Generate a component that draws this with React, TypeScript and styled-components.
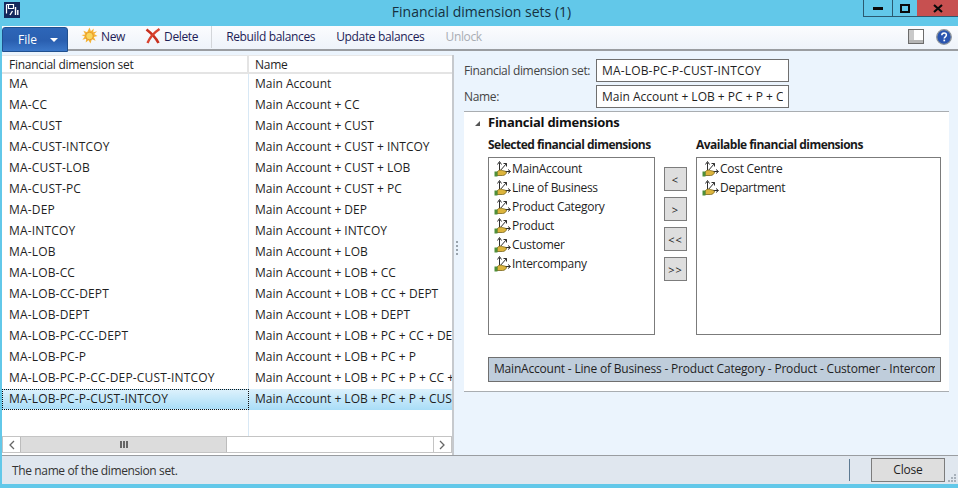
import { createGlobalStyle, styled } from "styled-components";

const GlobalStyle = createGlobalStyle`
  html, body {
    margin: 0;
    padding: 0;
    width: 958px;
    height: 488px;
    overflow: hidden;
    font-family: "Open Sans", "Liberation Sans", sans-serif;
    font-size: 12px;
    color: #1f1f1f;
  }
  * { box-sizing: border-box; }
`;

const Win = styled.div`
  width: 958px;
  height: 488px;
  background: #62c8e9;
  display: flex;
  flex-direction: column;
  padding: 0 0 4px 2px;
`;

const TitleBar = styled.div`
  height: 26px;
  margin-left: -2px;
  display: flex;
  align-items: flex-start;
  flex: none;
`;

const AppIcon = styled.svg`
  margin: 2px 0 0 4px;
`;

const Title = styled.div`
  flex: 1;
  text-align: center;
  font-size: 14px;
  line-height: 23px;
  color: #16303f;
  padding-left: 80px;
`;

const Controls = styled.div`
  display: flex;
  height: 17px;
`;

const Ctl = styled.div<{ $w: number; $close?: boolean }>`
  width: ${(p) => p.$w}px;
  height: 17px;
  display: flex;
  align-items: center;
  justify-content: center;
  background: ${(p) => (p.$close ? "#c75050" : "transparent")};
  border-bottom: 1px solid #2b5a70;
  border-left: ${(p) => (p.$close ? "none" : "1px solid #2b5a70")};
`;

const Toolbar = styled.div`
  height: 25px;
  flex: none;
  background: linear-gradient(#fbfcfe, #eef3fa);
  border-bottom: 2px solid #9a9da1;
  display: flex;
  align-items: stretch;
`;

const FileBtn = styled.div`
  width: 66px;
  height: 25px;
  margin-top: 1px;
  border-radius: 3px 3px 0 0;
  background: linear-gradient(#2d66b8, #2a5fb0 55%, #3c78c9);
  border: 1px solid #20508f;
  color: #fff;
  display: flex;
  align-items: center;
  padding-left: 15px;
  gap: 13px;
  position: relative;
  z-index: 1;
`;

const Caret = styled.span`
  width: 0;
  height: 0;
  border-left: 4px solid transparent;
  border-right: 4px solid transparent;
  border-top: 4px solid #fff;
`;

const ToolGroup = styled.div`
  display: flex;
  align-items: center;
  gap: 20px;
  padding: 0 13px 2px 13px;
  border-right: 1px solid #d3d6da;
  margin-bottom: 1px;
`;

const ToolText = styled.div`
  display: flex;
  align-items: center;
  gap: 21px;
  padding: 0 0 2px 14px;
`;

const ToolBtn = styled.span<{ $off?: boolean }>`
  display: flex;
  align-items: center;
  gap: 3px;
  white-space: nowrap;
  letter-spacing: -0.35px;
  color: ${(p) => (p.$off ? "#a9adb3" : "#1d1d57")};
`;

const ToolEnd = styled.div`
  margin-left: auto;
  display: flex;
  align-items: center;
  gap: 12px;
  padding: 0 6px 2px 0;
`;

const Body = styled.div`
  flex: 1;
  display: flex;
  min-height: 0;
  background: #ebf4fd;
`;

const GridPane = styled.div`
  width: 452px;
  flex: none;
  margin-top: 4px;
  background: #fff;
  border-right: 2px solid #c6c9cd;
  display: flex;
  flex-direction: column;
`;

const Head = styled.div`
  display: grid;
  grid-template-columns: 247px 1fr;
  height: 19px;
  flex: none;
  border-top: 1px solid #e7e7e7;
  border-bottom: 2px solid #e4e4e4;
  line-height: 17px;
`;

const HeadCell = styled.div`
  padding-left: 7px;
  letter-spacing: -0.28px;
  border-right: 2px solid #e4e4e4;
  &:last-child { border-right: none; padding-left: 6px; }
`;

const Rows = styled.div`
  flex: 1;
  overflow: hidden;
  background: linear-gradient(#d8e8f5, #d8e8f5) 246px 0 / 1px 100% no-repeat;
`;

const Row = styled.div`
  display: grid;
  grid-template-columns: 247px 1fr;
  height: 21px;
  line-height: 20px;
`;

const CodeCell = styled.div<{ $focus?: boolean }>`
  padding-left: ${(p) => (p.$focus ? "6px" : "7px")};
  white-space: nowrap;
  overflow: hidden;
  letter-spacing: 0.17px;
  background: ${(p) => (p.$focus ? "linear-gradient(#dcf1fc, #a9ddf7)" : "transparent")};
  border: ${(p) => (p.$focus ? "1px dotted #111" : "none")};
  line-height: ${(p) => (p.$focus ? "18px" : "20px")};
`;

const NameCell = styled.div<{ $sel?: boolean }>`
  padding-left: 6px;
  white-space: nowrap;
  overflow: hidden;
  background: ${(p) => (p.$sel ? "linear-gradient(#dcf1fc, #a9ddf7)" : "transparent")};
`;

const HScroll = styled.div`
  height: 17px;
  flex: none;
  margin-bottom: 2px;
  border: 1px solid #c4c4c4;
  display: flex;
  background: #fff;
`;

const ScrollArrow = styled.div`
  width: 17px;
  display: flex;
  align-items: center;
  justify-content: center;
`;

const Thumb = styled.div`
  width: 207px;
  background: #dcdcdc;
  border: 1px solid #bcbcbc;
  border-width: 0 1px;
  display: flex;
  align-items: center;
  justify-content: center;
  gap: 1px;
`;

const Grip = styled.i`
  width: 2px;
  height: 7px;
  background: #666;
`;

const Track = styled.div`
  flex: 1;
  border-right: 1px solid #c4c4c4;
`;

const Splitter = styled.div`
  width: 10px;
  flex: none;
  display: flex;
  flex-direction: column;
  align-items: center;
  justify-content: center;
  gap: 2px;
  padding: 0 4px 10px 0;
`;

const Dot = styled.i`
  width: 2px;
  height: 2px;
  background: #9aa4ad;
`;

const Form = styled.div`
  flex: 1;
  min-width: 0;
  padding: 8px 9px 0 0;
  display: flex;
  flex-direction: column;
`;

const FieldRow = styled.div`
  display: flex;
  align-items: center;
  height: 23px;
  margin-bottom: 3px;
`;

const FieldLabel = styled.div`
  width: 132px;
  letter-spacing: -0.33px;
  color: #444;
`;

const Input = styled.div<{ $caps?: boolean }>`
  width: 193px;
  height: 23px;
  background: #fff;
  border: 1px solid #6f6f6f;
  padding: 0 5px 0 5px;
  line-height: 21px;
  letter-spacing: ${(p) => (p.$caps ? "0.17px" : "0")};
`;

const Clip = styled.span`
  display: block;
  overflow: hidden;
  white-space: nowrap;
`;

const Group = styled.div`
  height: 281px;
  background: #fff;
  border-top: 1px solid #a9adb1;
  border-bottom: 1px solid #a9adb1;
  padding: 0 8px 0 24px;
`;

const GroupTitle = styled.div`
  height: 22px;
  font-size: 13px;
  font-weight: 700;
  line-height: 21px;
  letter-spacing: -0.25px;
  color: #111;
  position: relative;
`;

const Tri = styled.span`
  position: absolute;
  left: -13px;
  top: 9px;
  width: 0;
  height: 0;
  border-left: 5px solid transparent;
  border-bottom: 5px solid #555;
`;

const Columns = styled.div`
  display: grid;
  grid-template-columns: 167px 41px 245px;
`;

const SubTitle = styled.div`
  height: 23px;
  line-height: 21px;
  font-weight: 700;
  letter-spacing: -0.52px;
  color: #1a1a1a;
  white-space: nowrap;
`;

const ListBox = styled.div`
  height: 178px;
  border: 1px solid #7b7b7b;
  padding: 1px 0 0 5px;
  background: #fff;
`;

const ListItem = styled.div`
  display: flex;
  align-items: center;
  gap: 1px;
  height: 19px;
  letter-spacing: -0.28px;
  white-space: nowrap;
`;

const Moves = styled.div`
  padding: 33px 0 0 9px;
  display: flex;
  flex-direction: column;
  gap: 6px;
`;

const MoveBtn = styled.div`
  width: 23px;
  height: 24px;
  background: #dedede;
  border: 1px solid #7c7c7c;
  display: flex;
  align-items: center;
  justify-content: center;
  font-size: 11px;
  letter-spacing: 1px;
`;

const PathBox = styled.div`
  height: 25px;
  width: 453px;
  margin-top: 22px;
  background: #bfcddb;
  border: 1px solid #6f6f6f;
  padding: 0 5px 0 5px;
  line-height: 21px;
  letter-spacing: -0.2px;
`;

const Status = styled.div`
  height: 29px;
  flex: none;
  background: #e0e7ef;
  border-top: 1px solid #9a9da1;
  display: flex;
  align-items: center;
  padding-left: 10px;
  position: relative;
`;

const StatusText = styled.div`
  flex: 1;
  color: #333;
  letter-spacing: -0.37px;
`;

const StatusSep = styled.div`
  width: 1px;
  height: 22px;
  background: #5d7a92;
  margin-right: 21px;
`;

const CloseBtn = styled.div`
  width: 74px;
  height: 24px;
  background: #dedede;
  border: 1px solid #7c7c7c;
  text-align: center;
  line-height: 22px;
  margin-right: 13px;
  letter-spacing: -0.2px;
`;

const ResizeGrip = styled.svg`
  position: absolute;
  right: 1px;
  bottom: 1px;
`;

const rows: [string, string][] = [
  ["MA", "Main Account"],
  ["MA-CC", "Main Account + CC"],
  ["MA-CUST", "Main Account + CUST"],
  ["MA-CUST-INTCOY", "Main Account + CUST + INTCOY"],
  ["MA-CUST-LOB", "Main Account + CUST + LOB"],
  ["MA-CUST-PC", "Main Account + CUST + PC"],
  ["MA-DEP", "Main Account + DEP"],
  ["MA-INTCOY", "Main Account + INTCOY"],
  ["MA-LOB", "Main Account + LOB"],
  ["MA-LOB-CC", "Main Account + LOB + CC"],
  ["MA-LOB-CC-DEPT", "Main Account + LOB + CC + DEPT"],
  ["MA-LOB-DEPT", "Main Account + LOB + DEPT"],
  ["MA-LOB-PC-CC-DEPT", "Main Account + LOB + PC + CC + DEPT"],
  ["MA-LOB-PC-P", "Main Account + LOB + PC + P"],
  ["MA-LOB-PC-P-CC-DEP-CUST-INTCOY", "Main Account + LOB + PC + P + CC + DEP"],
  ["MA-LOB-PC-P-CUST-INTCOY", "Main Account + LOB + PC + P + CUST + INTCOY"],
];

const selected = ["MainAccount", "Line of Business", "Product Category", "Product", "Customer", "Intercompany"];
const available = ["Cost Centre", "Department"];

function DimIcon() {
  return (
    <svg width="17" height="17" viewBox="0 0 17 17" style={{ flex: "none" }}>
      <path d="M5.500 12V2.500M3.500 4.500l2-3 2 3" fill="none" stroke="#2e2e2e" strokeWidth="1" />
      <path d="M5.500 11.500 12.500 3.500M9.500 3.500h3v3" fill="none" stroke="#2e2e2e" strokeWidth="1" />
      <path d="M11 11.500h5M14 9.500l2.500 2-2.500 2" fill="none" stroke="#2e2e2e" strokeWidth="1" />
      <path d="M3 12c2-2.500 4-2 5.500-1.500 1.500.5 3 .5 4 1.500 0 2-2 3.500-4 3.500H3z" fill="#dcb43c" stroke="#77651a" strokeWidth="0.8" />
      <rect x="0.500" y="11.500" width="3" height="5" fill="#4e8f3a" />
    </svg>
  );
}

function SunIcon() {
  return (
    <svg width="17" height="18" viewBox="0 0 18 18">
      <path
        d="M9 0l1.500 4 3-3-.5 4 4-1-3 3 3.500 2-4 1 2 4-4-1.500L10 17l-2-3.500L5 16l.5-4-4 1 2.500-3.500L.500 8l4-.5L2.500 3.500l4 1.500z"
        fill="#f5b335"
      />
      <circle cx="9" cy="9" r="4" fill="#f9d65c" stroke="#e28d1e" strokeWidth="0.8" />
    </svg>
  );
}

function DeleteIcon() {
  return (
    <svg width="16" height="16" viewBox="0 0 16 16">
      <path d="M1.500 1.500C6 5 11 10 13.500 15" fill="none" stroke="#c8301f" strokeWidth="2.600" />
      <path d="M14.500 1C10 4 5 9 2.500 15" fill="none" stroke="#d9432f" strokeWidth="2.400" />
    </svg>
  );
}

export default function App() {
  return (
    <Win>
      <GlobalStyle />
      <TitleBar>
        <AppIcon width="16" height="16" viewBox="0 0 16 16">
          <rect width="16" height="16" fill="#13285c" />
          <path d="M2.500 2.500h7v4h-5v-4M2.500 2.500v9" fill="none" stroke="#fff" strokeWidth="1.200" />
          <path d="M11.500 5v8M13.800 8v5M6 13l2.500-4" fill="none" stroke="#fff" strokeWidth="1.400" />
        </AppIcon>
        <Title>Financial dimension sets (1)</Title>
        <Controls>
          <Ctl $w={29}>
            <svg width="10" height="4"><rect y="1" width="10" height="3" fill="#0a0a0a" /></svg>
          </Ctl>
          <Ctl $w={25}>
            <svg width="10" height="9"><rect x="1" y="1" width="8" height="7" fill="none" stroke="#0a0a0a" strokeWidth="2" /></svg>
          </Ctl>
          <Ctl $w={41} $close>
            <svg width="10" height="9"><path d="M1 1l8 7M9 1 1 8" stroke="#0a0a0a" strokeWidth="2.200" /></svg>
          </Ctl>
        </Controls>
      </TitleBar>
      <Toolbar>
        <FileBtn>File<Caret /></FileBtn>
        <ToolGroup>
          <ToolBtn><SunIcon />New</ToolBtn>
          <ToolBtn><DeleteIcon />Delete</ToolBtn>
        </ToolGroup>
        <ToolText>
          <ToolBtn>Rebuild balances</ToolBtn>
          <ToolBtn>Update balances</ToolBtn>
          <ToolBtn $off>Unlock</ToolBtn>
        </ToolText>
        <ToolEnd>
          <svg width="16" height="15" viewBox="0 0 16 15">
            <rect x="0.500" y="0.500" width="15" height="14" fill="#fff" stroke="#6c6c6c" />
            <rect x="1" y="1" width="5" height="10" fill="#c9c9c9" />
            <rect x="1" y="11" width="14" height="3" fill="#b5b5b5" />
          </svg>
          <svg width="16" height="16" viewBox="0 0 16 16">
            <circle cx="8" cy="8" r="7.300" fill="#2a55b0" stroke="#8e959c" strokeWidth="1.300" />
            <path d="M5.800 6.200c0-3 4.600-3 4.600-.2 0 1.800-2.200 1.800-2.200 3.600" fill="none" stroke="#fff" strokeWidth="1.500" />
            <rect x="7.400" y="10.600" width="1.700" height="1.700" fill="#fff" />
          </svg>
        </ToolEnd>
      </Toolbar>
      <Body>
        <GridPane>
          <Head>
            <HeadCell>Financial dimension set</HeadCell>
            <HeadCell>Name</HeadCell>
          </Head>
          <Rows>
            {rows.map(([id, name], i) => {
              const sel = i === rows.length - 1;
              return (
                <Row key={id}>
                  <CodeCell $focus={sel}>{id}</CodeCell>
                  <NameCell $sel={sel}>{name}</NameCell>
                </Row>
              );
            })}
          </Rows>
          <HScroll>
            <ScrollArrow>
              <svg width="7" height="10"><path d="M6 1 2 5l4 4" fill="none" stroke="#666" strokeWidth="1.300" /></svg>
            </ScrollArrow>
            <Thumb><Grip /><Grip /><Grip /></Thumb>
            <Track />
            <ScrollArrow>
              <svg width="7" height="10"><path d="M1 1l4 4-4 4" fill="none" stroke="#666" strokeWidth="1.300" /></svg>
            </ScrollArrow>
          </HScroll>
        </GridPane>
        <Splitter>
          <Dot /><Dot /><Dot /><Dot />
        </Splitter>
        <Form>
          <FieldRow>
            <FieldLabel>Financial dimension set:</FieldLabel>
            <Input $caps><Clip>MA-LOB-PC-P-CUST-INTCOY</Clip></Input>
          </FieldRow>
          <FieldRow>
            <FieldLabel>Name:</FieldLabel>
            <Input><Clip>Main Account + LOB + PC + P + CUST + INTCOY</Clip></Input>
          </FieldRow>
          <Group>
            <GroupTitle><Tri />Financial dimensions</GroupTitle>
            <Columns>
              <div>
                <SubTitle>Selected financial dimensions</SubTitle>
                <ListBox>
                  {selected.map((s) => (
                    <ListItem key={s}><DimIcon />{s}</ListItem>
                  ))}
                </ListBox>
              </div>
              <Moves>
                <MoveBtn>&lt;</MoveBtn>
                <MoveBtn>&gt;</MoveBtn>
                <MoveBtn>&lt;&lt;</MoveBtn>
                <MoveBtn>&gt;&gt;</MoveBtn>
              </Moves>
              <div>
                <SubTitle>Available financial dimensions</SubTitle>
                <ListBox>
                  {available.map((s) => (
                    <ListItem key={s}><DimIcon />{s}</ListItem>
                  ))}
                </ListBox>
              </div>
            </Columns>
            <PathBox><Clip>MainAccount - Line of Business - Product Category - Product - Customer - Intercompany</Clip></PathBox>
          </Group>
        </Form>
      </Body>
      <Status>
        <StatusText>The name of the dimension set.</StatusText>
        <StatusSep />
        <CloseBtn>Close</CloseBtn>
        <ResizeGrip width="10" height="10" viewBox="0 0 10 10">
          <path d="M7 1h2v2H7zM4 4h2v2H4zM7 4h2v2H7zM1 7h2v2H1zM4 7h2v2H4zM7 7h2v2H7z" fill="#a7b0ba" />
        </ResizeGrip>
      </Status>
    </Win>
  );
}
